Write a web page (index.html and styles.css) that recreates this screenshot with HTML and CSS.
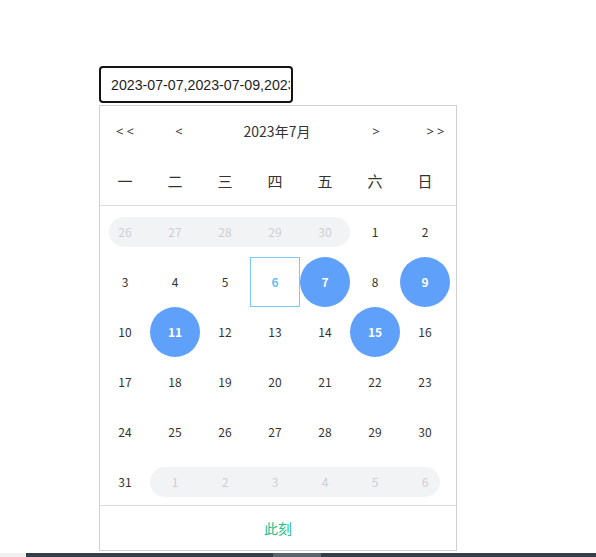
FILE: index.html
```html
<!DOCTYPE html>
<html lang="zh">
<head>
<meta charset="utf-8">
<title>日期选择</title>
<link rel="stylesheet" href="styles.css">
</head>
<body>
<div class="page">
  <input class="field" type="text" value="2023-07-07,2023-07-09,2023-07-11,2023-07-15" readonly>
  <div class="panel">
    <div class="header">
      <span class="nav nav-pp">&lt;&lt;</span>
      <span class="nav nav-p">&lt;</span>
      <span class="title">2023年7月</span>
      <span class="nav nav-n">&gt;</span>
      <span class="nav nav-nn">&gt;&gt;</span>
    </div>
    <div class="weekdays">
      <span>一</span><span>二</span><span>三</span><span>四</span><span>五</span><span>六</span><span>日</span>
    </div>
    <div class="days">
      <div class="day out first-l">26</div>
      <div class="day out">27</div>
      <div class="day out">28</div>
      <div class="day out">29</div>
      <div class="day out last-r">30</div>
      <div class="day">1</div>
      <div class="day">2</div>

      <div class="day">3</div>
      <div class="day">4</div>
      <div class="day">5</div>
      <div class="day today">6</div>
      <div class="day sel"><span>7</span></div>
      <div class="day">8</div>
      <div class="day sel"><span>9</span></div>

      <div class="day">10</div>
      <div class="day sel"><span>11</span></div>
      <div class="day">12</div>
      <div class="day">13</div>
      <div class="day">14</div>
      <div class="day sel"><span>15</span></div>
      <div class="day">16</div>

      <div class="day">17</div>
      <div class="day">18</div>
      <div class="day">19</div>
      <div class="day">20</div>
      <div class="day">21</div>
      <div class="day">22</div>
      <div class="day">23</div>

      <div class="day">24</div>
      <div class="day">25</div>
      <div class="day">26</div>
      <div class="day">27</div>
      <div class="day">28</div>
      <div class="day">29</div>
      <div class="day">30</div>

      <div class="day">31</div>
      <div class="day out first-f">1</div>
      <div class="day out">2</div>
      <div class="day out">3</div>
      <div class="day out">4</div>
      <div class="day out">5</div>
      <div class="day out last-i">6</div>
    </div>
    <div class="footer"><span class="now">此刻</span></div>
  </div>
</div>
<div class="bar">
  <div class="bar-left"></div>
  <div class="bar-track"><div class="bar-thumb"></div></div>
</div>
</body>
</html>
```

FILE: styles.css
```css
html, body {
  margin: 0;
  padding: 0;
  background: #fff;
}
body {
  font-family: "Noto Sans CJK SC", "Noto Sans", sans-serif;
  color: #333;
}
.page {
  padding: 66px 0 0 99px;
  height: 487px;
}
.field {
  display: block;
  box-sizing: border-box;
  width: 194px;
  height: 37px;
  margin: 0 0 2px 0;
  padding: 0 1px 0 10px;
  border: 2px solid #141414;
  border-radius: 4px;
  font-family: "Liberation Sans", Arial, sans-serif;
  font-size: 14.2px;
  color: #1e1e1e;
  background: #fff;
  outline: none;
}
.panel {
  box-sizing: border-box;
  width: 358px;
  border: 1px solid #cfcfcf;
  background: #fff;
}
.header {
  height: 49px;
  display: grid;
  grid-template-columns: 50px 50px 1fr 50px 50px;
  align-items: center;
  font-size: 14px;
  color: #333;
}
.header span {
  text-align: center;
}
.nav {
  font-family: "Noto Sans", sans-serif;
  font-size: 13px;
}
.nav-pp { letter-spacing: 3px; padding-left: 3px; }
.nav-p { padding-left: 8px; }
.nav-n { padding-right: 10px; }
.nav-nn { letter-spacing: 3px; padding-left: 12px; }
.title {
  font-size: 14px;
  padding-top: 1px;
  padding-right: 2px;
}
.weekdays {
  display: grid;
  grid-template-columns: repeat(7, 50px);
  height: 50px;
  align-items: center;
  border-bottom: 1px solid #dcdcdc;
  font-size: 15px;
  color: #333;
}
.weekdays span {
  text-align: center;
}
.days {
  display: grid;
  grid-template-columns: repeat(7, 50px);
  grid-auto-rows: 50px;
  padding-top: 1px;
  font-size: 12px;
}
.day {
  position: relative;
  display: flex;
  align-items: center;
  justify-content: center;
  color: #333;
  padding-bottom: 1px;
  box-sizing: border-box;
  z-index: 0;
}
.day.out {
  color: #cdcfd3;
}
.day.out::before {
  content: "";
  position: absolute;
  top: 10px;
  bottom: 10px;
  left: 0;
  right: 0;
  background: #f2f3f5;
  z-index: -1;
}
.day.first-l::before {
  left: 9px;
  border-radius: 15px 0 0 15px;
}
.day.last-r::before {
  border-radius: 0 15px 15px 0;
}
.day.first-f::before {
  border-radius: 15px 0 0 15px;
}
.day.last-i::before {
  right: 10px;
  border-radius: 0 15px 15px 0;
}
.day.today {
  border: 1px solid #7ccaf6;
  color: #66bff2;
  font-weight: bold;
}
.day.sel {
  padding-bottom: 0;
}
.day.sel span {
  display: flex;
  align-items: center;
  justify-content: center;
  width: 50px;
  height: 50px;
  padding-bottom: 1px;
  box-sizing: border-box;
  border-radius: 50%;
  background: #5ea0fa;
  color: #fff;
  font-weight: bold;
}
.footer {
  margin-top: -2px;
  height: 44px;
  border-top: 1px solid #dcdcdc;
  display: flex;
  align-items: center;
  justify-content: center;
}
.now {
  font-size: 14px;
  color: #22bd8b;
}
.bar {
  display: flex;
  height: 4px;
}
.bar-left {
  width: 26px;
  background: #f0f0f0;
}
.bar-track {
  flex: 1;
  background: #333e4b;
  display: flex;
  padding-left: 247px;
}
.bar-thumb {
  width: 48px;
  background: #5b6570;
}
```
